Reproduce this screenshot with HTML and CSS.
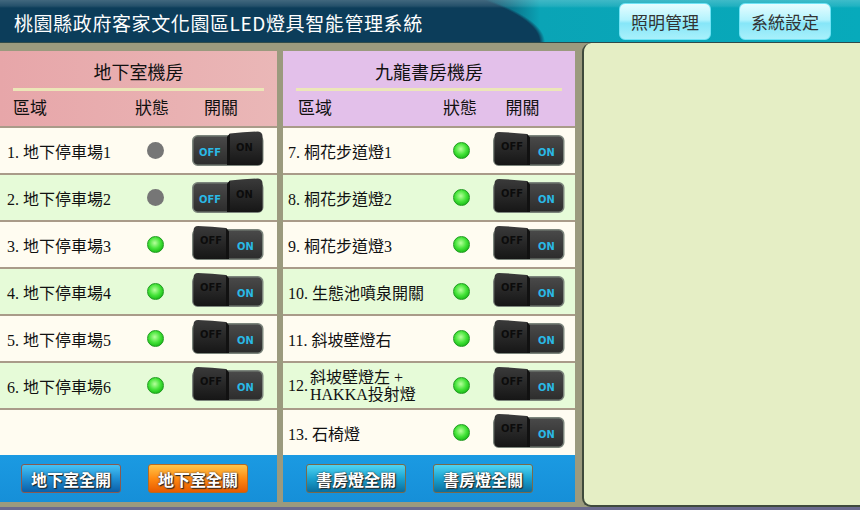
FILE: index.html
```html
<!DOCTYPE html>
<html lang="zh-Hant">
<head>
    <meta charset="UTF-8">
    <title>LED燈具智能管理系統</title>
    <link rel="stylesheet" href="styles.css">
</head>
<body>

    <!-- switch graphics -->
    <svg class="defs" width="0" height="0">
        <defs>
            <linearGradient id="flat" x1="0" y1="0" x2="0" y2="1">
                <stop offset="0" stop-color="#4a4a4a"/>
                <stop offset="1" stop-color="#2c2c2c"/>
            </linearGradient>
            <linearGradient id="raised" x1="0" y1="0" x2="0" y2="1">
                <stop offset="0" stop-color="#3a3a3a"/>
                <stop offset="1" stop-color="#161616"/>
            </linearGradient>
            <symbol id="sw-off" viewBox="0 0 72 36">
                <rect x="0.75" y="4.75" width="70" height="29.5" rx="5" fill="url(#flat)" stroke="#7c857c" stroke-width="1.5"/>
                <path d="M35 6 L38 2.5 Q52 1 66 0.5 Q70.5 1 70.5 5.5 L70.5 29.5 Q70.5 34 66 34 L35 34 Z" fill="url(#raised)"/>
                <path d="M35 6 L38 2.5 L38 34 L35 34 Z" fill="#111"/>
                <text x="7" y="25" class="sw-lit">OFF</text>
                <text x="44" y="20" class="sw-dark">ON</text>
            </symbol>
            <symbol id="sw-on" viewBox="0 0 72 36">
                <rect x="0.75" y="4.75" width="70" height="29.5" rx="5" fill="url(#flat)" stroke="#7c857c" stroke-width="1.5"/>
                <path d="M1.5 6 Q1.5 1 6 1 Q20 1.5 34 3 L37 6.5 L37 34 L6 34 Q1.5 34 1.5 30 Z" fill="url(#raised)"/>
                <path d="M34 3 L37 6.5 L37 34 L34 34 Z" fill="#111"/>
                <text x="8" y="19" class="sw-dark">OFF</text>
                <text x="45" y="25" class="sw-lit">ON</text>
            </symbol>
        </defs>
    </svg>

    <!-- barre du haut -->
    <header class="topbar">
        <h1 class="title">桃園縣政府客家文化園區LED燈具智能管理系統</h1>
        <nav class="top-nav">
            <a href="#" class="top-btn">照明管理</a>
            <a href="#" class="top-btn">系統設定</a>
        </nav>
    </header>

    <div class="main">
        <div class="rooms">

            <!-- 地下室機房 -->
            <section class="room room-basement">
                <div class="room-head">
                    <h2>地下室機房</h2>
                    <div class="cols">
                        <span>區域</span><span class="c">狀態</span><span class="c">開關</span>
                    </div>
                </div>
                <div class="rows">
                    <div class="row"><span class="name">1. 地下停車場1</span><span class="dot off"></span><svg class="sw"><use href="#sw-off"/></svg></div>
                    <div class="row alt"><span class="name">2. 地下停車場2</span><span class="dot off"></span><svg class="sw"><use href="#sw-off"/></svg></div>
                    <div class="row"><span class="name">3. 地下停車場3</span><span class="dot on"></span><svg class="sw"><use href="#sw-on"/></svg></div>
                    <div class="row alt"><span class="name">4. 地下停車場4</span><span class="dot on"></span><svg class="sw"><use href="#sw-on"/></svg></div>
                    <div class="row"><span class="name">5. 地下停車場5</span><span class="dot on"></span><svg class="sw"><use href="#sw-on"/></svg></div>
                    <div class="row alt"><span class="name">6. 地下停車場6</span><span class="dot on"></span><svg class="sw"><use href="#sw-on"/></svg></div>
                    <div class="filler"></div>
                </div>
                <div class="room-foot">
                    <a href="#" class="btn btn-blue">地下室全開</a>
                    <a href="#" class="btn btn-orange">地下室全關</a>
                </div>
            </section>

            <!-- 九龍書房機房 -->
            <section class="room room-study">
                <div class="room-head">
                    <h2>九龍書房機房</h2>
                    <div class="cols">
                        <span>區域</span><span class="c">狀態</span><span class="c">開關</span>
                    </div>
                </div>
                <div class="rows">
                    <div class="row"><span class="name">7. 桐花步道燈1</span><span class="dot on"></span><svg class="sw"><use href="#sw-on"/></svg></div>
                    <div class="row alt"><span class="name">8. 桐花步道燈2</span><span class="dot on"></span><svg class="sw"><use href="#sw-on"/></svg></div>
                    <div class="row"><span class="name">9. 桐花步道燈3</span><span class="dot on"></span><svg class="sw"><use href="#sw-on"/></svg></div>
                    <div class="row alt"><span class="name">10. 生態池噴泉開關</span><span class="dot on"></span><svg class="sw"><use href="#sw-on"/></svg></div>
                    <div class="row"><span class="name">11. 斜坡壁燈右</span><span class="dot on"></span><svg class="sw"><use href="#sw-on"/></svg></div>
                    <div class="row alt"><span class="name two"><span>12.</span><span>斜坡壁燈左 +<br>HAKKA投射燈</span></span><span class="dot on"></span><svg class="sw"><use href="#sw-on"/></svg></div>
                    <div class="row"><span class="name">13. 石椅燈</span><span class="dot on"></span><svg class="sw"><use href="#sw-on"/></svg></div>
                </div>
                <div class="room-foot">
                    <a href="#" class="btn btn-teal">書房燈全開</a>
                    <a href="#" class="btn btn-teal">書房燈全關</a>
                </div>
            </section>

        </div>

        <!-- panneau de droite -->
        <div class="side"></div>
    </div>

</body>
</html>
```

FILE: styles.css
```css
body {
    margin: 0;
    width: 860px;
    height: 510px;
    overflow: hidden;
    background: #6b6a8e;
    font-family: "Liberation Serif", "Noto Sans CJK TC", serif;
}

.defs {
    position: absolute;
}

/* barre du haut */
.topbar {
    height: 42px;
    display: flex;
    align-items: center;
    justify-content: space-between;
    border-bottom: 1px solid #2f4a4a;
    background:
        linear-gradient(180deg, rgba(255, 255, 255, 0.22) 0, rgba(255, 255, 255, 0.1) 6px, rgba(255, 255, 255, 0) 8px),
        radial-gradient(ellipse 545px 95px at 0 42px, #0c3d5a 99%, rgba(12, 61, 90, 0) 100%),
        linear-gradient(90deg, #0c3d5a 0, #0c3d5a 480px, #0aa4b6 540px, #07aabb 100%);
}

.title {
    margin: 0 0 0 14px;
    padding-top: 2px;
    font-family: "Noto Sans CJK TC", sans-serif;
    font-size: 19px;
    font-weight: normal;
    color: white;
    letter-spacing: 0.6px;
}

.top-nav {
    display: flex;
    gap: 28px;
    margin-right: 29px;
    padding-top: 1px;
}

.top-btn {
    width: 90px;
    height: 35px;
    display: flex;
    align-items: center;
    justify-content: center;
    border: 1px solid #6ee3f5;
    border-radius: 6px;
    background: linear-gradient(180deg, #e6fdff 0, #b4f3fd 45%, #86e6f8 55%, #a8f0fb 100%);
    font-family: "Noto Sans CJK TC", sans-serif;
    font-size: 17px;
    color: #333;
    text-decoration: none;
}

/* zone principale */
.main {
    height: 464px;
    display: flex;
    background: #9b9a7e;
}

.rooms {
    display: flex;
    gap: 6px;
    padding: 8px 0 5px 0;
}

.room {
    display: flex;
    flex-direction: column;
}

.room-basement {
    width: 277px;
}

.room-study {
    width: 292px;
}

.room-head {
    height: 75px;
    box-sizing: border-box;
    padding-top: 9px;
}

.room-basement .room-head {
    background: linear-gradient(90deg, #e7a6a9, #eab7b7);
}

.room-study .room-head {
    background: #e3c0ea;
}

.room-head h2 {
    margin: 0 13px;
    padding-bottom: 5px;
    border-bottom: 3px solid #ece6b8;
    text-align: center;
    font-family: "Noto Sans CJK TC", sans-serif;
    font-size: 18px;
    font-weight: normal;
    line-height: 23px;
    color: #111;
}

.cols {
    display: grid;
    margin-top: 5px;
    font-family: "Noto Sans CJK TC", sans-serif;
    font-size: 17px;
    line-height: 22px;
    color: #111;
}

.room-basement .cols {
    grid-template-columns: 126px 52px 1fr;
    padding-left: 13px;
}

.room-study .cols {
    grid-template-columns: 152px 52px 1fr;
    padding-left: 15px;
}

.cols .c {
    text-align: center;
}

.room-basement .cols span:nth-child(2),
.room-basement .cols span:nth-child(3) {
    margin-left: -26px;
}

.room-study .cols span:nth-child(2),
.room-study .cols span:nth-child(3) {
    margin-left: -32px;
}

/* lignes */
.rows {
    flex: 1;
    display: flex;
    flex-direction: column;
}

.row {
    height: 45px;
    flex: none;
    display: grid;
    align-items: center;
    border-top: 2px solid #a99b89;
    background: #fffcf1;
}

.row.alt {
    background: #e6fbd8;
}

.room-basement .row {
    grid-template-columns: 126px 52px 1fr;
    padding-left: 7px;
}

.room-study .row {
    grid-template-columns: 152px 52px 1fr;
    padding-left: 5px;
}

.room-basement .row .dot,
.room-basement .row .sw {
    margin-left: -7px;
}

.room-study .row .dot,
.room-study .row .sw {
    margin-left: -9px;
}

.filler {
    flex: 1;
    border-top: 2px solid #a99b89;
    background: #fffcf1;
}

.name {
    font-size: 16px;
    color: #111;
    white-space: nowrap;
}

.name.two {
    display: flex;
    align-items: center;
    gap: 2px;
    line-height: 17px;
}

.dot {
    justify-self: center;
    width: 17px;
    height: 17px;
    border-radius: 50%;
    box-sizing: border-box;
}

.dot.off {
    background: #767676;
}

.dot.on {
    background: radial-gradient(circle at 45% 40%, #b6ff9c 0, #46e43a 45%, #17b815 80%);
    border: 1px solid #1f9a1f;
}

.sw {
    justify-self: center;
    width: 72px;
    height: 36px;
    margin-top: -3px;
}

.sw-lit {
    font-family: "DejaVu Sans Condensed", "DejaVu Sans", sans-serif;
    font-size: 11px;
    font-weight: bold;
    fill: #2ab9e6;
}

.sw-dark {
    font-family: "DejaVu Sans Condensed", "DejaVu Sans", sans-serif;
    font-size: 11px;
    font-weight: bold;
    fill: #0c0c0c;
}

/* boutons du bas */
.room-foot {
    height: 47px;
    display: flex;
    align-items: center;
    gap: 27px;
    background: linear-gradient(180deg, #1b9ae2, #168fd8);
}

.room-basement .room-foot {
    padding-left: 21px;
}

.room-study .room-foot {
    padding-left: 23px;
}

.btn {
    width: 98px;
    height: 27px;
    display: flex;
    align-items: center;
    justify-content: center;
    border-radius: 3px;
    font-family: "Noto Sans CJK TC", sans-serif;
    font-size: 16px;
    font-weight: bold;
    color: white;
    text-decoration: none;
    text-shadow: 1px 1px 1px #222, 0 0 2px #333;
}

.btn-blue {
    border: 1px solid #8a5a50;
    background: linear-gradient(180deg, #45c2f5 0, #1f8fd4 50%, #0b5fa8 100%);
}

.btn-orange {
    border: 1px solid #b86a20;
    background: linear-gradient(180deg, #ffc54a 0, #ff8a12 50%, #e85a00 100%);
}

.btn-teal {
    border: 1px solid #7a6a4a;
    background: linear-gradient(180deg, #4fd4f2 0, #1aa2d0 50%, #0a6e9e 100%);
}

/* panneau de droite */
.side {
    flex: 1;
    margin-left: 7px;
    border-left: 2px solid #3f4a3c;
    border-bottom: 2px solid #3f4a3c;
    border-radius: 9px 0 0 9px;
    background: #e5eec5;
}
```
